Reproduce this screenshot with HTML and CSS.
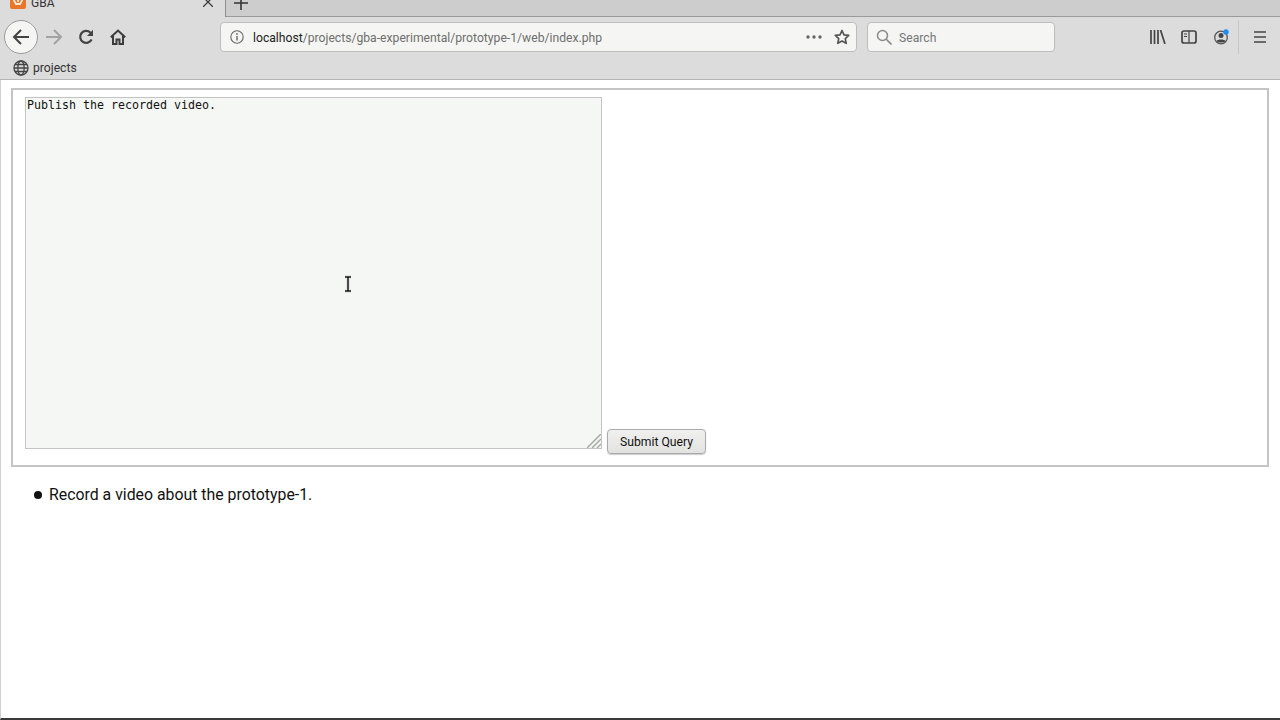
FILE: index.html
```html
<!DOCTYPE html>
<html lang="en">
<head>
<meta charset="utf-8">
<title>GBA</title>
<link rel="stylesheet" href="styles.css">
</head>
<body>
<div class="browser">
  <div class="tabstrip">
    <div class="tab">
      <svg class="favicon" width="16" height="16" viewBox="0 0 16 16"><rect width="16" height="16" rx="2" fill="#e8772a"/><path d="M4 4v3.500l2 3.500h4l2-3.500V4M8 5.500V9" fill="none" stroke="#fbe9dc" stroke-width="1.800"/></svg>
      <span class="tab-title">GBA</span>
      <svg class="tab-close" width="10" height="10" viewBox="0 0 10 10"><path d="M0 0l10 10M10 0L0 10" stroke="#3c3c3c" stroke-width="1.300"/></svg>
    </div>
    <div class="newtab"><svg width="14" height="14" viewBox="0 0 14 14"><path d="M7 0v14M0 7h14" stroke="#333" stroke-width="1.600"/></svg></div>
  </div>
  <div class="toolbar">
    <div class="nav-back"><svg width="18" height="18" viewBox="0 0 18 18"><path d="M17 9H2M9 2L2 9l7 7" fill="none" stroke="#444" stroke-width="2"/></svg></div>
    <button class="tool-btn nav-forward"><svg width="18" height="18" viewBox="0 0 18 18"><path d="M1 9h15M9 2l7 7-7 7" fill="none" stroke="#a2a2a2" stroke-width="2"/></svg></button>
    <button class="tool-btn nav-reload"><svg width="16" height="16" viewBox="0 0 16 16"><path d="M13.600 10.500A6 6 0 1 1 12.300 3.500L14 5" fill="none" stroke="#444" stroke-width="2.200"/><path d="M15 .8V7H9z" fill="#444"/></svg></button>
    <button class="tool-btn nav-home"><svg width="16" height="16" viewBox="0 0 16 16"><path d="M.8 8.200L8 1.500l7.200 6.700M3 7v8h3.500v-4.500h3V15H13V7" fill="none" stroke="#3c3c3c" stroke-width="2"/></svg></button>
    <div class="urlbar">
      <svg class="info" width="16" height="16" viewBox="0 0 16 16"><circle cx="8" cy="8" r="6.200" fill="none" stroke="#666" stroke-width="1.100"/><path d="M8 7v4.500" stroke="#666" stroke-width="1.400"/><circle cx="8" cy="4.900" r=".9" fill="#666"/></svg>
      <span class="url"><span class="host">localhost</span>/projects/gba-experimental/prototype-1/web/index.php</span>
      <svg class="dots" width="16" height="4" viewBox="0 0 16 4"><circle cx="2" cy="2" r="1.700" fill="#666"/><circle cx="8" cy="2" r="1.700" fill="#666"/><circle cx="14" cy="2" r="1.700" fill="#666"/></svg>
      <svg class="star" width="16" height="16" viewBox="0 0 16 16"><path d="M8 1.500l2 4.300 4.700.6-3.400 3.200.9 4.700L8 12l-4.200 2.300.9-4.700L1.300 6.400 6 5.800z" fill="none" stroke="#555" stroke-width="1.700" stroke-linejoin="round"/></svg>
    </div>
    <div class="searchbar">
      <svg width="16" height="16" viewBox="0 0 16 16"><circle cx="6.500" cy="6.500" r="5" fill="none" stroke="#8a8a8a" stroke-width="1.500"/><path d="M10 10l5.500 5.500" stroke="#8a8a8a" stroke-width="1.700"/></svg>
      <span class="search-text">Search</span>
    </div>
    <div class="tool-right">
      <svg class="tool-icon" width="16" height="14" viewBox="0 0 16 14"><path d="M1 0v14M4.500 0v14M8 0v14M10.500 0l4.500 14" fill="none" stroke="#444" stroke-width="1.700"/></svg>
      <svg class="tool-icon tool-icon-wide" width="16" height="14" viewBox="0 0 16 14"><rect x="1" y="1" width="14" height="12" rx="2" fill="none" stroke="#444" stroke-width="1.700"/><path d="M8 1v12M3 4h3M3 6.500h3" stroke="#444" stroke-width="1.200"/></svg>
      <svg width="16" height="16" viewBox="0 0 16 16"><circle cx="8" cy="8.500" r="6.300" fill="none" stroke="#555" stroke-width="1.300"/><circle cx="8" cy="6.500" r="2.500" fill="#444"/><path d="M3.500 12c1-2 8-2 9 0-2 2-7 2-9 0z" fill="#444"/><circle cx="13" cy="3" r="2.700" fill="#1e8cf0"/></svg>
      <span class="sep"></span>
      <svg width="12" height="12" viewBox="0 0 12 12"><path d="M0 1h12M0 6h12M0 11h12" stroke="#444" stroke-width="1.700"/></svg>
    </div>
  </div>
  <div class="bookmarks">
    <svg width="16" height="16" viewBox="0 0 16 16"><g fill="none" stroke="#444" stroke-width="1.300"><circle cx="8" cy="8" r="7"/><ellipse cx="8" cy="8" rx="3.200" ry="7"/><path d="M1 8h14M2 4.500h12M2 11.500h12"/></g></svg>
    <span class="bookmark-label">projects</span>
  </div>
  <main class="page">
    <form class="task-form">
      <fieldset class="task-fields">
        <div class="input-wrap">
          <textarea class="task-input" spellcheck="false">Publish the recorded video.</textarea>
          <svg class="resizer" width="14" height="14" viewBox="0 0 14 14"><path d="M0 14L14 0M5 14l9-9M10 14l4-4" stroke="#a8a8a8" stroke-width="1.500"/></svg>
        </div>
        <button class="submit" type="button">Submit Query</button>
      </fieldset>
    </form>
    <ul class="tasks">
      <li class="task">Record a video about the prototype-1.</li>
    </ul>
    <svg class="cursor" width="10" height="18" viewBox="0 0 10 18"><path d="M2 2h6M5 2v14M2 16h6" fill="none" stroke="#c8c8c8" stroke-width="4"/><path d="M2 2h6M5 2v14M2 16h6" fill="none" stroke="#fff" stroke-width="3"/><path d="M2 2h6M5 2v14M2 16h6" fill="none" stroke="#111" stroke-width="1.500"/></svg>
  </main>
</div>
</body>
</html>
```
FILE: styles.css
```css
html, body { margin: 0; height: 100%; }
body { background: #fff; font-family: Roboto, sans-serif; overflow: hidden; }
.browser { display: flex; flex-direction: column; height: 720px; }
.tabstrip { height: 17px; background: #cdcdcd; display: flex; flex: none; }
.tab { width: 226px; height: 17px; background: #dcdcdc; border-right: 1px solid #8f8f8f; box-sizing: border-box; display: flex; align-items: flex-start; padding-left: 10px; gap: 5px; overflow: hidden; flex: none; }
.favicon { margin-top: -7px; flex: none; }
.tab-title { font-size: 12px; color: #333; margin-top: -5px; flex: 1; line-height: 16px; }
.tab-close { margin-top: -3px; margin-right: 12px; flex: none; }
.newtab { padding-left: 8px; height: 17px; overflow: hidden; box-sizing: border-box; flex: 1; border-bottom: 1px solid #9a9a9a; }
.newtab svg { display: block; margin-top: -4px; }
.toolbar { height: 40px; background: #dcdcdc; display: flex; align-items: center; flex: none; }
.nav-back { width: 32px; height: 32px; border: 1px solid #9b9b9b; border-radius: 50%; background: #f5f6f4; margin-left: 4px; display: flex; align-items: center; justify-content: center; flex: none; }
.tool-btn { background: none; border: 0; padding: 0; width: 32px; height: 32px; display: flex; align-items: center; justify-content: center; flex: none; }
.urlbar { width: 637px; height: 30px; margin-left: 86px; background: #f5f6f4; border: 1px solid #bdbdbd; border-radius: 4px; box-sizing: border-box; display: flex; align-items: center; padding: 0 6px 0 8px; flex: none; }
.info { flex: none; }
.url { margin: 1px 0 0 8px; font-size: 12.160px; color: #6e6e6e; flex: 1; white-space: nowrap; }
.host { color: #222; }
.dots { margin-right: 12px; flex: none; }
.star { flex: none; }
.searchbar { width: 188px; height: 30px; margin-left: 10px; background: #f5f6f4; border: 1px solid #bdbdbd; border-radius: 4px; box-sizing: border-box; display: flex; align-items: center; padding-left: 8px; gap: 7px; flex: none; }
.search-text { margin-top: 1px; font-size: 12.160px; color: #777; }
.tool-right { margin-left: 95px; display: flex; align-items: center; flex: none; }
.tool-icon { margin-right: 15px; }
.tool-icon-wide { margin-right: 16px; }
.sep { width: 1px; height: 34px; background: #c8c8c8; margin: 0 15px 0 9px; }
.bookmarks { height: 22px; background: #dcdcdc; border-bottom: 1px solid #b4b4b4; display: flex; align-items: center; padding-left: 13px; gap: 4px; flex: none; }
.bookmark-label { font-size: 12.160px; color: #333; }
.page { flex: 1; position: relative; border-left: 1px solid #cfcfcf; border-bottom: 2px solid #3a3a3a; padding: 8px 1px 0 0; min-height: 0; }
.task-form { margin: 0 8px; }
.task-fields { margin: 0 2px; padding: 7px 12px 11px; border: 2px solid #c4c4c4; height: 379px; box-sizing: border-box; display: flex; align-items: flex-end; gap: 5px; }
.input-wrap { position: relative; margin-bottom: 5px; display: flex; }
.task-input { width: 577px; height: 352px; margin: 0; padding: 1px; box-sizing: border-box; background: #f5f7f4; border: 1px solid #c4c4c4; font: 11.640px/13px "DejaVu Sans Mono", monospace; color: #111; resize: none; outline: 0; }
.resizer { position: absolute; right: 1px; bottom: 1px; }
.submit { width: 99px; height: 25px; padding: 0; background: linear-gradient(#f0f0ef, #e2e2e0); border: 1px solid #aaa; border-radius: 4px; box-shadow: 0 1px 1px #ccc; font: 12.160px Roboto, sans-serif; color: #111; }
.tasks { margin: 18px 0 0 8px; padding: 0 0 0 40px; list-style: none; font-size: 15.850px; line-height: 20px; color: #111; }
.task { display: flex; align-items: center; }
.task::before { content: ""; width: 8px; height: 8px; border-radius: 50%; background: #111; margin-left: -15px; margin-right: 7px; flex: none; }
.cursor { position: absolute; left: 342px; top: 195px; }
```
